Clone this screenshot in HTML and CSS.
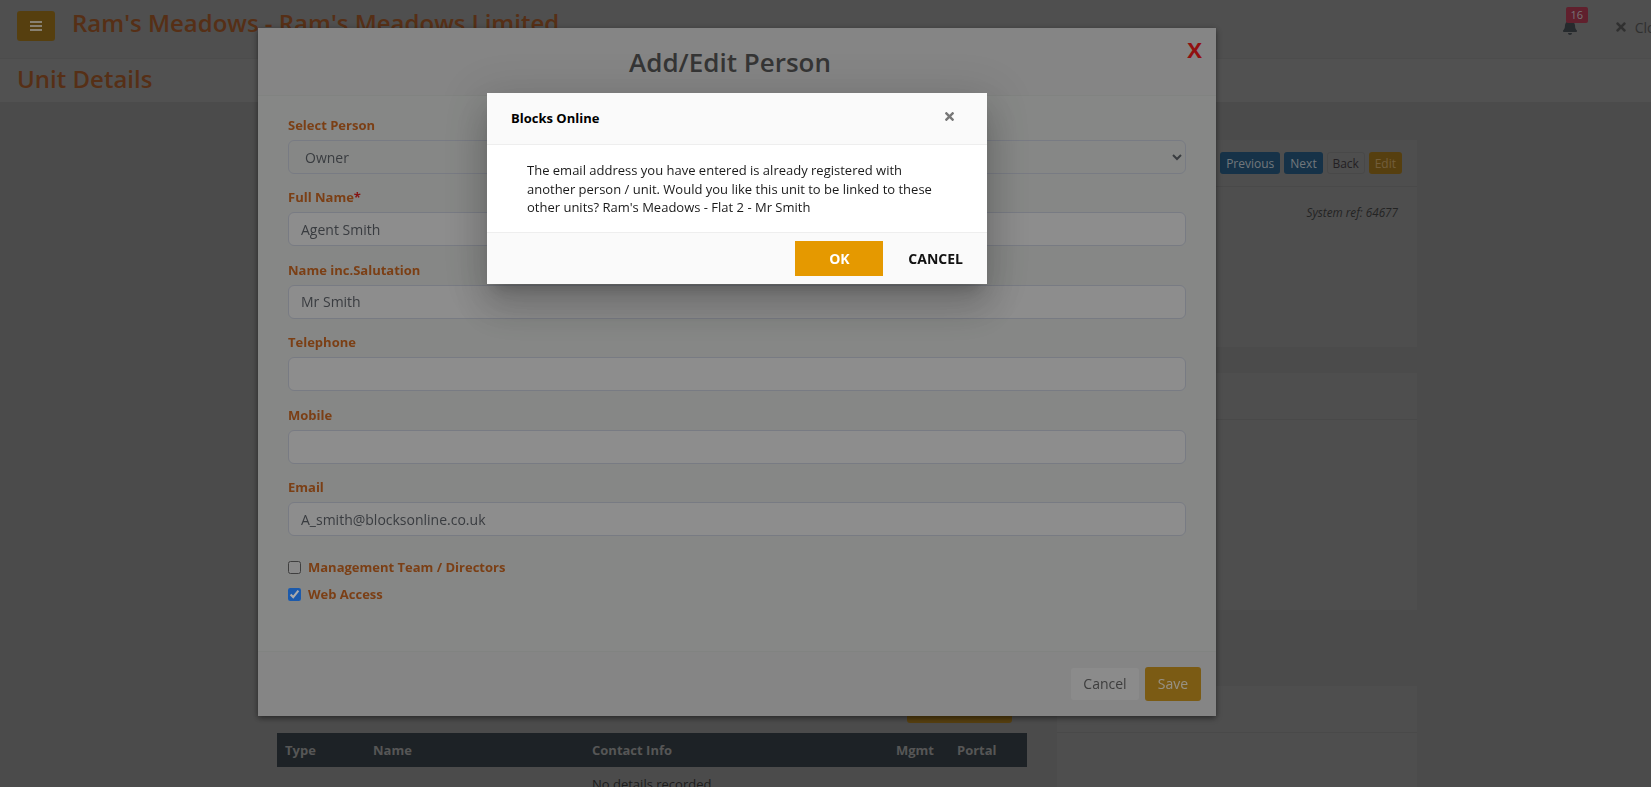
FILE: index.html
```html
<!DOCTYPE html>
<html lang="en">
<head>
    <meta charset="UTF-8">
    <meta name="viewport" content="width=device-width, initial-scale=1.0">
    <title>Unit Details</title>
    <link rel="stylesheet" href="styles.css">
</head>
<body>
    <!-- Page behind the dialogs -->
    <div class="topbar">
        <button class="menu-btn" type="button">
            <svg class="menu-icon" viewBox="0 0 12 10"><path d="M0 0h12v2H0zM0 4h12v2H0zM0 8h12v2H0z"/></svg>
        </button>
        <div class="site-title">Ram's Meadows - Ram's Meadows Limited</div>
        <div class="topbar-right">
            <div class="bell">
                <svg class="bell-icon" viewBox="0 0 448 512"><path d="M224 512c35.32 0 63.97-28.65 63.97-64H160.03c0 35.35 28.65 64 63.97 64zm215.39-149.71c-19.32-20.76-55.47-51.99-55.47-154.29 0-77.7-54.48-139.9-127.94-155.16V32c0-17.67-14.32-32-31.98-32s-31.98 14.33-31.98 32v20.84C118.56 68.1 64.08 130.3 64.08 208c0 102.3-36.15 133.53-55.47 154.29-6 6.45-8.66 14.16-8.61 21.71.11 16.4 12.98 32 32.1 32h383.8c19.12 0 32-15.6 32.1-32 .05-7.55-2.61-15.27-8.61-21.71z"/></svg>
                <span class="badge">16</span>
            </div>
            <div class="close-link">
                <svg class="close-icon" viewBox="0 0 352 512"><path d="M242.72 256l100.07-100.07c12.28-12.28 12.28-32.19 0-44.48l-22.24-22.24c-12.28-12.28-32.19-12.28-44.48 0L176 189.28 75.93 89.21c-12.28-12.28-32.19-12.28-44.48 0L9.21 111.45c-12.28 12.28-12.28 32.19 0 44.48L109.28 256 9.21 356.07c-12.28 12.28-12.28 32.19 0 44.48l22.24 22.24c12.28 12.28 32.2 12.28 44.48 0L176 322.72l100.07 100.07c12.28 12.28 32.2 12.28 44.48 0l22.24-22.24c12.28-12.28 12.28-32.19 0-44.48L242.72 256z"/></svg>
                <span>Close</span>
            </div>
        </div>
    </div>
    <div class="subbar">Unit Details</div>

    <div class="content">
        <div class="left-col">
            <div class="people-head">
                <h3 class="people-title">Occupants</h3>
                <button class="add-btn" type="button">Add Person</button>
            </div>
            <table class="people-table">
                <thead>
                    <tr>
                        <th class="col-type">Type</th>
                        <th class="col-name">Name</th>
                        <th class="col-contact">Contact Info</th>
                        <th class="col-mgmt">Mgmt</th>
                        <th>Portal</th>
                    </tr>
                </thead>
                <tbody>
                    <tr><td colspan="2"></td><td colspan="3">No details recorded</td></tr>
                </tbody>
            </table>
        </div>

        <div class="right-col">
            <div class="card card-unit">
                <div class="card-head">
                    <button class="btn btn-blue" type="button">Previous</button>
                    <button class="btn btn-blue" type="button">Next</button>
                    <button class="btn btn-plain" type="button">Back</button>
                    <button class="btn btn-orange" type="button">Edit</button>
                </div>
                <div class="system-ref">System ref: 64677</div>
            </div>
            <div class="card card-middle">
                <div class="card-head"></div>
            </div>
            <div class="card card-last">
                <div class="card-head"></div>
            </div>
        </div>
    </div>

    <!-- Add/Edit Person -->
    <div class="backdrop backdrop-first"></div>
    <div class="person-modal">
        <div class="person-head">
            <h2 class="person-title">Add/Edit Person</h2>
            <span class="person-close">X</span>
        </div>
        <form class="person-body">
            <div class="field">
                <label class="field-label">Select Person</label>
                <select class="field-input field-select"><option>Owner</option></select>
            </div>
            <div class="field">
                <label class="field-label">Full Name<span class="required">*</span></label>
                <input class="field-input" type="text" value="Agent Smith">
            </div>
            <div class="field">
                <label class="field-label">Name inc.Salutation</label>
                <input class="field-input" type="text" value="Mr Smith">
            </div>
            <div class="field">
                <label class="field-label">Telephone</label>
                <input class="field-input" type="text">
            </div>
            <div class="field">
                <label class="field-label">Mobile</label>
                <input class="field-input" type="text">
            </div>
            <div class="field">
                <label class="field-label">Email</label>
                <input class="field-input" type="text" value="A_smith@blocksonline.co.uk">
            </div>
            <label class="check-row"><input type="checkbox"><span>Management Team / Directors</span></label>
            <label class="check-row"><input type="checkbox" checked><span>Web Access</span></label>
        </form>
        <div class="person-foot">
            <button class="foot-btn foot-cancel" type="button">Cancel</button>
            <button class="foot-btn foot-save" type="button">Save</button>
        </div>
    </div>

    <!-- Confirm dialog -->
    <div class="backdrop backdrop-second"></div>
    <div class="confirm">
        <div class="confirm-head">
            <span class="confirm-title">Blocks Online</span>
            <svg class="confirm-x" viewBox="0 0 352 512"><path d="M242.72 256l100.07-100.07c12.28-12.28 12.28-32.19 0-44.48l-22.24-22.24c-12.28-12.28-32.19-12.28-44.48 0L176 189.28 75.93 89.21c-12.28-12.28-32.19-12.28-44.48 0L9.21 111.45c-12.28 12.28-12.28 32.19 0 44.48L109.28 256 9.21 356.07c-12.28 12.28-12.28 32.19 0 44.48l22.24 22.24c12.28 12.28 32.2 12.28 44.48 0L176 322.72l100.07 100.07c12.28 12.28 32.2 12.28 44.48 0l22.24-22.24c12.28-12.28 12.28-32.19 0-44.48L242.72 256z"/></svg>
        </div>
        <div class="confirm-body">The email address you have entered is already registered with another person / unit. Would you like this unit to be linked to these other units? Ram's Meadows - Flat 2 - Mr Smith</div>
        <div class="confirm-foot">
            <button class="confirm-ok" type="button">OK</button>
            <button class="confirm-cancel" type="button">CANCEL</button>
        </div>
    </div>
</body>
</html>
```
FILE: styles.css
```css
/* General */
html, body {
    height: 100%;
}

body {
    margin: 0;
    overflow: hidden;
    font-family: "Open Sans", "Liberation Sans", sans-serif;
    font-size: 14px;
    color: #333333;
    background-color: #858585;
}

button {
    font-family: inherit;
}

/* Top bar */
.topbar {
    display: flex;
    align-items: center;
    height: 58px;
    padding: 0 0 6px 17px;
    box-sizing: border-box;
    background-color: #8b8b8b;
}

.menu-btn {
    display: flex;
    align-items: center;
    justify-content: center;
    width: 38px;
    height: 30px;
    padding: 0;
    border: none;
    border-radius: 3px;
    background-color: #98701c;
}

.menu-icon {
    width: 12px;
    height: 10px;
    fill: #efe2c8;
}

.site-title {
    margin-left: 17px;
    margin-bottom: 8px;
    font-size: 24px;
    font-weight: 600;
    color: #985428;
}

.topbar-right {
    display: flex;
    align-items: center;
    gap: 39px;
    margin-left: auto;
    margin-right: -19px;
    padding-top: 2px;
}

.bell {
    position: relative;
    width: 14px;
    height: 16px;
}

.bell-icon {
    display: block;
    width: 14px;
    height: 16px;
    fill: #444a50;
}

.badge {
    position: absolute;
    top: -12px;
    left: 3px;
    width: 22px;
    height: 16px;
    border-radius: 2px;
    font-size: 11px;
    line-height: 16px;
    text-align: center;
    color: #d0c8cc;
    background-color: #a83a50;
}

.close-link {
    display: flex;
    align-items: center;
    gap: 9px;
    font-size: 14px;
    color: #555555;
}

.close-icon {
    width: 10px;
    height: 14px;
    fill: #555555;
}

/* Sub bar */
.subbar {
    height: 44px;
    padding-left: 17px;
    line-height: 40px;
    font-size: 24px;
    font-weight: 600;
    color: #985428;
    background-color: #909090;
    border-top: 1px solid #878787;
    box-sizing: border-box;
}

/* Page content */
.content {
    display: grid;
    grid-template-columns: 750px 360px;
    column-gap: 30px;
    padding: 38px 0 0 277px;
}

.left-col {
    padding-top: 540px;
}

.people-head {
    display: flex;
    align-items: flex-end;
    justify-content: space-between;
    height: 43px;
    padding: 0 15px 0 8px;
    margin-bottom: 10px;
}

.people-title {
    margin: 0 0 6px;
    font-size: 16px;
    font-weight: 600;
}

.add-btn {
    width: 105px;
    height: 34px;
    border: none;
    border-radius: 3px;
    color: #ffffff;
    background-color: #98701c;
}

.people-table {
    width: 100%;
    border-collapse: collapse;
    color: #333333;
}

.people-table th {
    height: 34px;
    padding: 0 0 0 8px;
    font-size: 13px;
    font-weight: 700;
    text-align: left;
    color: #989898;
    background-color: #343e43;
}

.people-table td {
    height: 34px;
    padding: 0 0 0 8px;
    font-size: 13px;
}

.col-type {
    width: 80px;
}

.col-name {
    width: 211px;
}

.col-contact {
    width: 296px;
}

.col-mgmt {
    width: 53px;
}

.right-col {
    display: flex;
    flex-direction: column;
}

.card {
    background-color: #8a8a8a;
    box-sizing: border-box;
}

.card-head {
    height: 47px;
    box-sizing: border-box;
    border-bottom: 1px solid #808080;
}

.card-unit {
    height: 207px;
}

.card-unit .card-head {
    display: flex;
    align-items: center;
    justify-content: flex-end;
    gap: 4px;
    padding-right: 15px;
}

.card-middle {
    height: 237px;
    margin-top: 26px;
}

.card-last {
    height: 120px;
    margin-top: 76px;
}

.btn {
    height: 22px;
    padding: 0 5px;
    border: 1px solid transparent;
    border-radius: 3px;
    font-size: 12px;
}

.btn-blue {
    color: #c6d0d8;
    background-color: #27597f;
}

.btn-plain {
    margin-left: 0;
    width: 38px;
    padding: 0;
    color: #3f393f;
    background-color: transparent;
    border-color: #7f7f7f;
}

.btn-orange {
    color: #c8a468;
    background-color: #98701c;
}

.system-ref {
    padding: 17px 19px 0 0;
    font-size: 11.7px;
    font-style: italic;
    text-align: right;
    color: #3f3f3f;
}

/* Dialog backdrops */
.backdrop {
    position: fixed;
    top: 0;
    right: 0;
    bottom: 0;
    left: 0;
}

.backdrop-first {
    background-color: rgba(0, 0, 0, 0.15);
}

.backdrop-second {
    background-color: rgba(0, 0, 0, 0.33);
}

/* Add/Edit Person */
.person-modal {
    position: fixed;
    top: 28px;
    left: 258px;
    display: flex;
    flex-direction: column;
    width: 958px;
    height: 688px;
    background-color: #c8cac8;
    box-shadow: 0 2px 6px rgba(0, 0, 0, 0.5);
}

.person-head {
    position: relative;
    height: 68px;
    box-sizing: border-box;
    border-bottom: 1px solid #c1c3c1;
    background-color: #c7c7c7;
}

.person-title {
    margin: 0;
    padding: 16px 14px 0 0;
    font-size: 26px;
    font-weight: 600;
    line-height: 36px;
    text-align: center;
    color: #505050;
}

.person-close {
    position: absolute;
    top: 6px;
    right: 14px;
    font-size: 22px;
    font-weight: 700;
    color: #d81818;
}

.person-body {
    flex: 1;
    padding: 19px 30px 0;
}

.field {
    margin-bottom: 13.45px;
}

.field-label {
    display: block;
    height: 20px;
    margin-bottom: 5px;
    font-size: 13px;
    font-weight: 700;
    line-height: 20px;
    color: #b85e20;
}

.required {
    color: #c81e1e;
}

.field-input {
    display: block;
    width: 100%;
    height: 34px;
    padding: 0 12px;
    box-sizing: border-box;
    border: 1px solid #b4b8c4;
    border-radius: 6px;
    font-family: inherit;
    font-size: 14px;
    color: #565a60;
    background-color: #d2d2d2;
}

.field-select {
    background-color: #c8cac8;
}

.check-row {
    display: flex;
    align-items: center;
    gap: 7px;
    height: 27px;
    font-size: 13px;
    font-weight: 700;
    color: #b85e20;
}

.check-row input {
    margin: 0;
    accent-color: #2b87ff;
}

.check-row input:not(:checked) {
    filter: brightness(0.8);
}

.check-row:first-of-type {
    margin-top: 17.5px;
}

.person-foot {
    display: flex;
    align-items: center;
    justify-content: flex-end;
    gap: 6px;
    height: 65px;
    padding: 0 15px 1px 0;
    box-sizing: border-box;
    border-top: 1px solid #c1c3c1;
    background-color: #c7c7c7;
}

.foot-btn {
    height: 34px;
    border-radius: 3px;
    font-size: 14px;
}

.foot-cancel {
    width: 68px;
    height: 32px;
    border: none;
    color: #5c5c5c;
    background-color: #d0d0d0;
}

.foot-save {
    width: 56px;
    border: none;
    color: #e0d8c4;
    background-color: #b8881f;
}

/* Confirm dialog */
.confirm {
    position: fixed;
    top: 93px;
    left: 487px;
    width: 500px;
    height: 191px;
    background-color: #ffffff;
    box-shadow: 0 11px 15px -7px rgba(0, 0, 0, 0.2), 0 24px 38px 3px rgba(0, 0, 0, 0.14), 0 9px 46px 8px rgba(0, 0, 0, 0.12);
    border-radius: 1px;
}

.confirm-head {
    display: flex;
    align-items: center;
    justify-content: space-between;
    height: 52px;
    padding: 0 33px 4px 24px;
    box-sizing: border-box;
    border-bottom: 1px solid #eeeeee;
    background-color: #fafafa;
}

.confirm-title {
    margin-top: 2px;
    font-size: 13px;
    font-weight: 700;
    color: #000000;
}

.confirm-x {
    width: 9px;
    height: 13px;
    fill: #777777;
}

.confirm-body {
    height: 87px;
    padding: 16px 40px 0;
    box-sizing: border-box;
    font-size: 13px;
    line-height: 18.5px;
    color: #1a1a1a;
}

.confirm-foot {
    display: flex;
    align-items: flex-start;
    justify-content: flex-end;
    height: 52px;
    padding: 8px 24px 0 0;
    box-sizing: border-box;
    border-top: 1px solid #eeeeee;
    background-color: #fafafa;
}

.confirm-ok {
    width: 88px;
    height: 35px;
    border: none;
    font-size: 14px;
    font-weight: 700;
    color: #ffffff;
    background-color: #e59900;
}

.confirm-cancel {
    margin-left: 25px;
    height: 35px;
    padding: 0;
    border: none;
    font-size: 14px;
    font-weight: 700;
    color: #111111;
    background-color: transparent;
}
```
